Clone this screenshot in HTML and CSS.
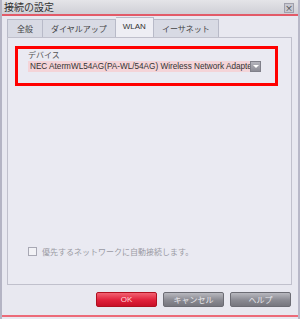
FILE: index.html
```html
<!DOCTYPE html>
<html>
<head>
    <meta charset="utf-8">
    <title>接続の設定</title>
    <link rel="stylesheet" href="styles.css">
</head>
<body>
    <div class="window">
        <div class="titlebar">
            <span class="title">接続の設定</span>
            <span class="close">×</span>
        </div>

        <div class="content">
            <div class="tabs">
                <div class="tab">全般</div>
                <div class="tab">ダイヤルアップ</div>
                <div class="tab active">WLAN</div>
                <div class="tab">イーサネット</div>
            </div>

            <div class="panel">
                <div class="device-box">
                    <div class="label">デバイス</div>
                    <div class="select">
                        <span class="select-text">NEC AtermWL54AG(PA-WL/54AG) Wireless Network Adapter</span>
                        <span class="select-btn"></span>
                    </div>
                </div>

                <label class="auto-connect">
                    <span class="checkbox"></span>
                    優先するネットワークに自動接続します。
                </label>
            </div>

            <div class="buttons">
                <div class="btn btn-ok">OK</div>
                <div class="btn">キャンセル</div>
                <div class="btn">ヘルプ</div>
            </div>
        </div>
        <div class="bottom-line"></div>
    </div>
</body>
</html>
```

FILE: styles.css
```css
body {
    margin: 0;
    font-family: "Noto Sans CJK JP", "Liberation Sans", sans-serif;
    font-size: 8px;
    color: #444;
}
.window {
    width: 300px;
    height: 319px;
    box-sizing: border-box;
    background-color: #e8e8f0;
    border-left: 2px solid #b4b4c4;
    border-right: 2px solid #b8b8c8;
    display: flex;
    flex-direction: column;
}
.titlebar {
    height: 14px;
    display: flex;
    align-items: center;
    justify-content: space-between;
    padding: 0 4px 0 2px;
    background: linear-gradient(#e4e4e8, #cfcfd6);
    border-bottom: 2px solid #e25a68;
}
.title {
    font-size: 10px;
    color: #333;
    line-height: 14px;
}
.close {
    width: 8px;
    height: 8px;
    margin-top: 2px;
    font-size: 8px;
    line-height: 8px;
    text-align: center;
    color: #333;
    background: #c8c8d0;
    border: 1px solid #a0a0ac;
}
.content {
    flex: 1;
    display: flex;
    flex-direction: column;
    padding: 1px 6px 0 5px;
}
.tabs {
    display: flex;
    align-items: flex-end;
    height: 20px;
}
.tab {
    height: 17px;
    line-height: 17px;
    padding: 0 8px;
    background: #d8dae4;
    border: 1px solid #b8bac8;
    border-bottom: none;
    color: #444;
}
.tab + .tab {
    border-left: none;
}
.tab:first-child {
    padding: 0 9px;
}
.tab.active {
    height: 19px;
    background: #eeeef4;
    color: #333;
    font-family: "Liberation Sans", sans-serif;
    padding: 0 7px;
}
.panel {
    height: 248px;
    box-sizing: border-box;
    border: 1px solid #c0c0cc;
    background: #eaeaf2;
    padding: 8px 13px 0 7px;
    display: flex;
    flex-direction: column;
}
.device-box {
    height: 40px;
    box-sizing: border-box;
    border: 3px solid #f00;
    padding: 0 0 0 10px;
}
.label {
    line-height: 12px;
    color: #555;
}
.select {
    display: flex;
    align-items: center;
    width: 233px;
    height: 11px;
}
.select-text {
    width: 222px;
    height: 11px;
    overflow: hidden;
    white-space: nowrap;
    background: #f4d4d8;
    font-family: "Liberation Sans", sans-serif;
    font-size: 8.2px;
    line-height: 11px;
    color: #333;
    padding-left: 2px;
    box-sizing: border-box;
}
.select-btn {
    width: 11px;
    height: 11px;
    box-sizing: border-box;
    background: linear-gradient(#b4b4bc, #8c8c96);
    border: 1px solid #80808a;
    position: relative;
}
.select-btn::after {
    content: "";
    position: absolute;
    left: 2px;
    top: 3px;
    border-left: 3px solid transparent;
    border-right: 3px solid transparent;
    border-top: 3px solid #fff;
}
.auto-connect {
    margin-top: auto;
    margin-bottom: 27px;
    margin-left: 13px;
    display: flex;
    align-items: center;
    gap: 5px;
    color: #9a9aa4;
}
.checkbox {
    width: 7px;
    height: 7px;
    border: 1px solid #a8a8b4;
    background: #f2f2f6;
}
.buttons {
    display: flex;
    justify-content: flex-end;
    gap: 6px;
    margin-top: 7px;
    padding-right: 1px;
}
.btn {
    width: 61px;
    height: 15px;
    box-sizing: border-box;
    line-height: 13px;
    text-align: center;
    color: #e8e8ec;
    background: linear-gradient(#b8b8bf, #8a8a92 55%, #76767e);
    border: 1px solid #6c6c74;
    border-radius: 2px;
}
.btn-ok {
    background: linear-gradient(#f26272, #e0203a 55%, #c81028);
    border-color: #b01020;
    color: #ffd8dc;
    font-family: "Liberation Sans", sans-serif;
}
.bottom-line {
    height: 2px;
    margin-bottom: 2px;
    background: #ec6a78;
}
```
